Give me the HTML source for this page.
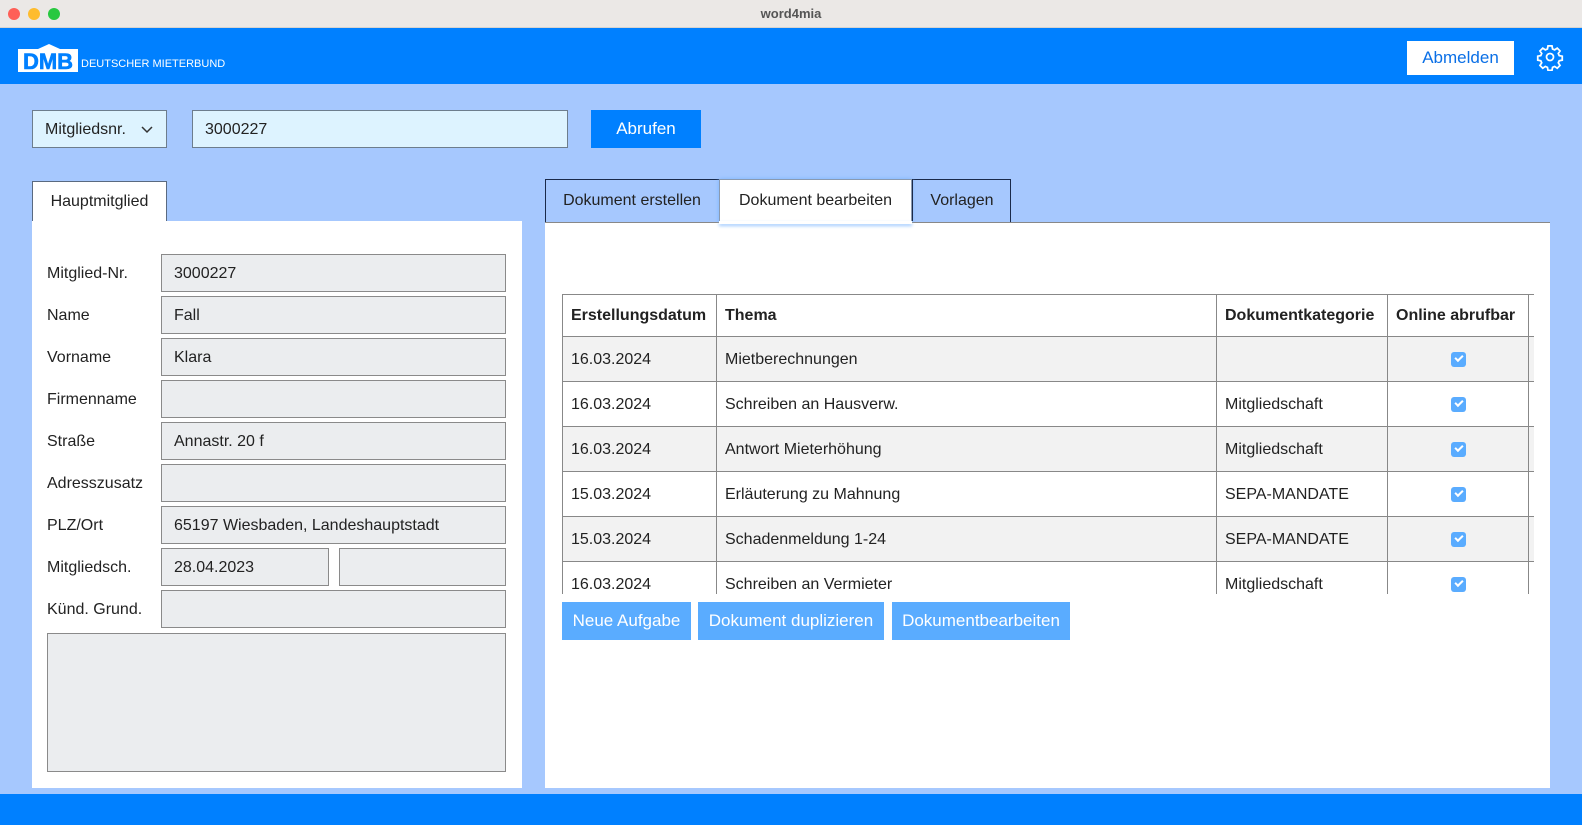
<!DOCTYPE html><html><head><meta charset="utf-8"><style>
*{box-sizing:border-box;margin:0;padding:0}
body{width:1582px;height:825px;overflow:hidden;background:#a6c8fe;font-family:"Liberation Sans",Arial,sans-serif;font-size:16px;color:#222;position:relative}
.a{position:absolute}
.tb{left:0;top:0;width:1582px;height:28px;background:#ebe8e6;border-bottom:1px solid #d6d3d0;text-align:center;font-size:13px;font-weight:bold;color:#555;line-height:28px}
.dot{width:12px;height:12px;border-radius:6px;top:8px}
.hd{left:0;top:28px;width:1582px;height:56px;background:#0080ff}
.fld{background:#ebedef;border:1px solid #8a8a8a;padding-left:12px;line-height:38px;height:38px}
.lbl{left:47px;line-height:40px}
.btn{background:#5aacff;color:#fff;text-align:center;line-height:38px;height:38px;font-size:17px}
td,th{border:1px solid #888;padding:1px 8px 0;height:45px;text-align:left;white-space:nowrap;overflow:hidden}
th{font-weight:bold;height:42px}
table{border-collapse:collapse;table-layout:fixed}
.cb{display:inline-block;width:15px;height:15px;background:#5aacff;border-radius:3px;position:relative;top:2px}
.cb:after{content:"";position:absolute;left:4px;top:3px;width:6px;height:3px;border-left:2px solid #fff;border-bottom:2px solid #fff;transform:rotate(-45deg)}
</style></head><body>
<div class="a tb">word4mia</div>
<div class="a dot" style="left:8px;background:#fe5f57"></div>
<div class="a dot" style="left:28px;background:#febc2e"></div>
<div class="a dot" style="left:48px;background:#28c840"></div>
<div class="a hd"></div>
<svg class="a" style="left:18px;top:43px" width="62" height="30"><path d="M0 6 H20 L31 1 L42 6 H60 V29 H0Z" fill="#fff"/><text x="30" y="26" text-anchor="middle" font-family="Liberation Sans" font-weight="bold" font-size="22" fill="#0080ff" stroke="#0080ff" stroke-width="0.6">DMB</text></svg>
<div class="a" style="left:81px;top:58px;color:#fff;font-size:11px">DEUTSCHER MIETERBUND</div>
<div class="a" style="left:1407px;top:41px;width:107px;height:34px;background:#fff;color:#0a6fe6;text-align:center;line-height:34px;font-size:17px">Abmelden</div>
<svg class="a" style="left:1536px;top:43px" width="28" height="28" viewBox="0 0 24 24" fill="none" stroke="#fff" stroke-width="1.5"><circle cx="12" cy="12" r="3"/><path d="M10.3 2.5h3.4l.5 2.6 1.8.8 2.2-1.5 2.4 2.4-1.5 2.2.8 1.8 2.6.5v3.4l-2.6.5-.8 1.8 1.5 2.2-2.4 2.4-2.2-1.5-1.8.8-.5 2.6h-3.4l-.5-2.6-1.8-.8-2.2 1.5-2.4-2.4 1.5-2.2-.8-1.8-2.6-.5v-3.4l2.6-.5.8-1.8-1.5-2.2 2.4-2.4 2.2 1.5 1.8-.8z"/></svg>
<div class="a" style="left:32px;top:110px;width:135px;height:38px;background:#ddf3ff;border:1px solid #6d7d8d;line-height:38px;padding-left:12px">Mitgliedsnr.<svg style="position:absolute;left:108px;top:15px" width="12" height="8"><path d="M1 1l5 5 5-5" stroke="#333" stroke-width="1.5" fill="none"/></svg></div>
<div class="a" style="left:192px;top:110px;width:376px;height:38px;background:#ddf3ff;border:1px solid #6d7d8d;line-height:38px;padding-left:12px">3000227</div>
<div class="a btn" style="left:591px;top:110px;width:110px;background:#0080ff">Abrufen</div>
<div class="a" style="left:32px;top:181px;width:135px;height:41px;background:#fff;border:1px solid #5a6a80;border-bottom:none;line-height:40px;text-align:center">Hauptmitglied</div>
<div class="a" style="left:32px;top:221px;width:490px;height:567px;background:#fff"></div>
<div class="a lbl" style="top:254px">Mitglied-Nr.</div><div class="a fld" style="left:161px;top:254px;width:345px">3000227</div>
<div class="a lbl" style="top:296px">Name</div><div class="a fld" style="left:161px;top:296px;width:345px">Fall</div>
<div class="a lbl" style="top:338px">Vorname</div><div class="a fld" style="left:161px;top:338px;width:345px">Klara</div>
<div class="a lbl" style="top:380px">Firmenname</div><div class="a fld" style="left:161px;top:380px;width:345px"></div>
<div class="a lbl" style="top:422px">Straße</div><div class="a fld" style="left:161px;top:422px;width:345px">Annastr. 20 f</div>
<div class="a lbl" style="top:464px">Adresszusatz</div><div class="a fld" style="left:161px;top:464px;width:345px"></div>
<div class="a lbl" style="top:506px">PLZ/Ort</div><div class="a fld" style="left:161px;top:506px;width:345px">65197 Wiesbaden, Landeshauptstadt</div>
<div class="a lbl" style="top:548px">Mitgliedsch.</div><div class="a fld" style="left:161px;top:548px;width:168px">28.04.2023</div><div class="a fld" style="left:339px;top:548px;width:167px"></div>
<div class="a lbl" style="top:590px">Künd. Grund.</div><div class="a fld" style="left:161px;top:590px;width:345px"></div>
<div class="a fld" style="left:47px;top:633px;width:459px;height:139px"></div>
<div class="a" style="left:545px;top:179px;width:466px;height:43px;border:1px solid #1a2a4a;border-bottom:none"></div>
<div class="a" style="left:545px;top:179px;width:174px;height:42px;line-height:44px;text-align:center">Dokument erstellen</div>
<div class="a" style="left:719px;top:179px;width:193px;height:45px;background:#fff;border:1px solid #8a9ab0;border-bottom:none;box-shadow:0 0 4px #7ab4ff;line-height:42px;text-align:center">Dokument bearbeiten</div>
<div class="a" style="left:912px;top:179px;width:99px;height:42px;line-height:44px;text-align:center;border-left:1px solid #1a2a4a">Vorlagen</div>
<div class="a" style="left:545px;top:222px;width:1005px;height:566px;background:#fff;border-top:1px solid #888"></div>
<div class="a" style="left:719px;top:221px;width:193px;height:3px;background:#fff;box-shadow:0 2px 3px #9cc8ff"></div>
<div class="a" style="left:562px;top:294px;width:972px;height:300px;overflow:hidden">
<table style="width:990px"><colgroup><col style="width:154px"><col style="width:500px"><col style="width:171px"><col style="width:141px"><col style="width:24px"></colgroup>
<tr><th>Erstellungsdatum</th><th>Thema</th><th>Dokumentkategorie</th><th>Online abrufbar</th><th></th></tr>
<tr style="background:#f2f2f2"><td>16.03.2024</td><td>Mietberechnungen</td><td></td><td style="text-align:center"><span class="cb"></span></td><td></td></tr>
<tr><td>16.03.2024</td><td>Schreiben an Hausverw.</td><td>Mitgliedschaft</td><td style="text-align:center"><span class="cb"></span></td><td></td></tr>
<tr style="background:#f2f2f2"><td>16.03.2024</td><td>Antwort Mieterhöhung</td><td>Mitgliedschaft</td><td style="text-align:center"><span class="cb"></span></td><td></td></tr>
<tr><td>15.03.2024</td><td>Erläuterung zu Mahnung</td><td>SEPA-MANDATE</td><td style="text-align:center"><span class="cb"></span></td><td></td></tr>
<tr style="background:#f2f2f2"><td>15.03.2024</td><td>Schadenmeldung 1-24</td><td>SEPA-MANDATE</td><td style="text-align:center"><span class="cb"></span></td><td></td></tr>
<tr><td>16.03.2024</td><td>Schreiben an Vermieter</td><td>Mitgliedschaft</td><td style="text-align:center"><span class="cb"></span></td><td></td></tr></table></div>
<div class="a btn" style="left:562px;top:602px;width:129px">Neue Aufgabe</div>
<div class="a btn" style="left:698px;top:602px;width:186px">Dokument duplizieren</div>
<div class="a btn" style="left:892px;top:602px;width:178px">Dokumentbearbeiten</div>
<div class="a" style="left:0;top:794px;width:1582px;height:31px;background:#0080ff"></div>
</body></html>
